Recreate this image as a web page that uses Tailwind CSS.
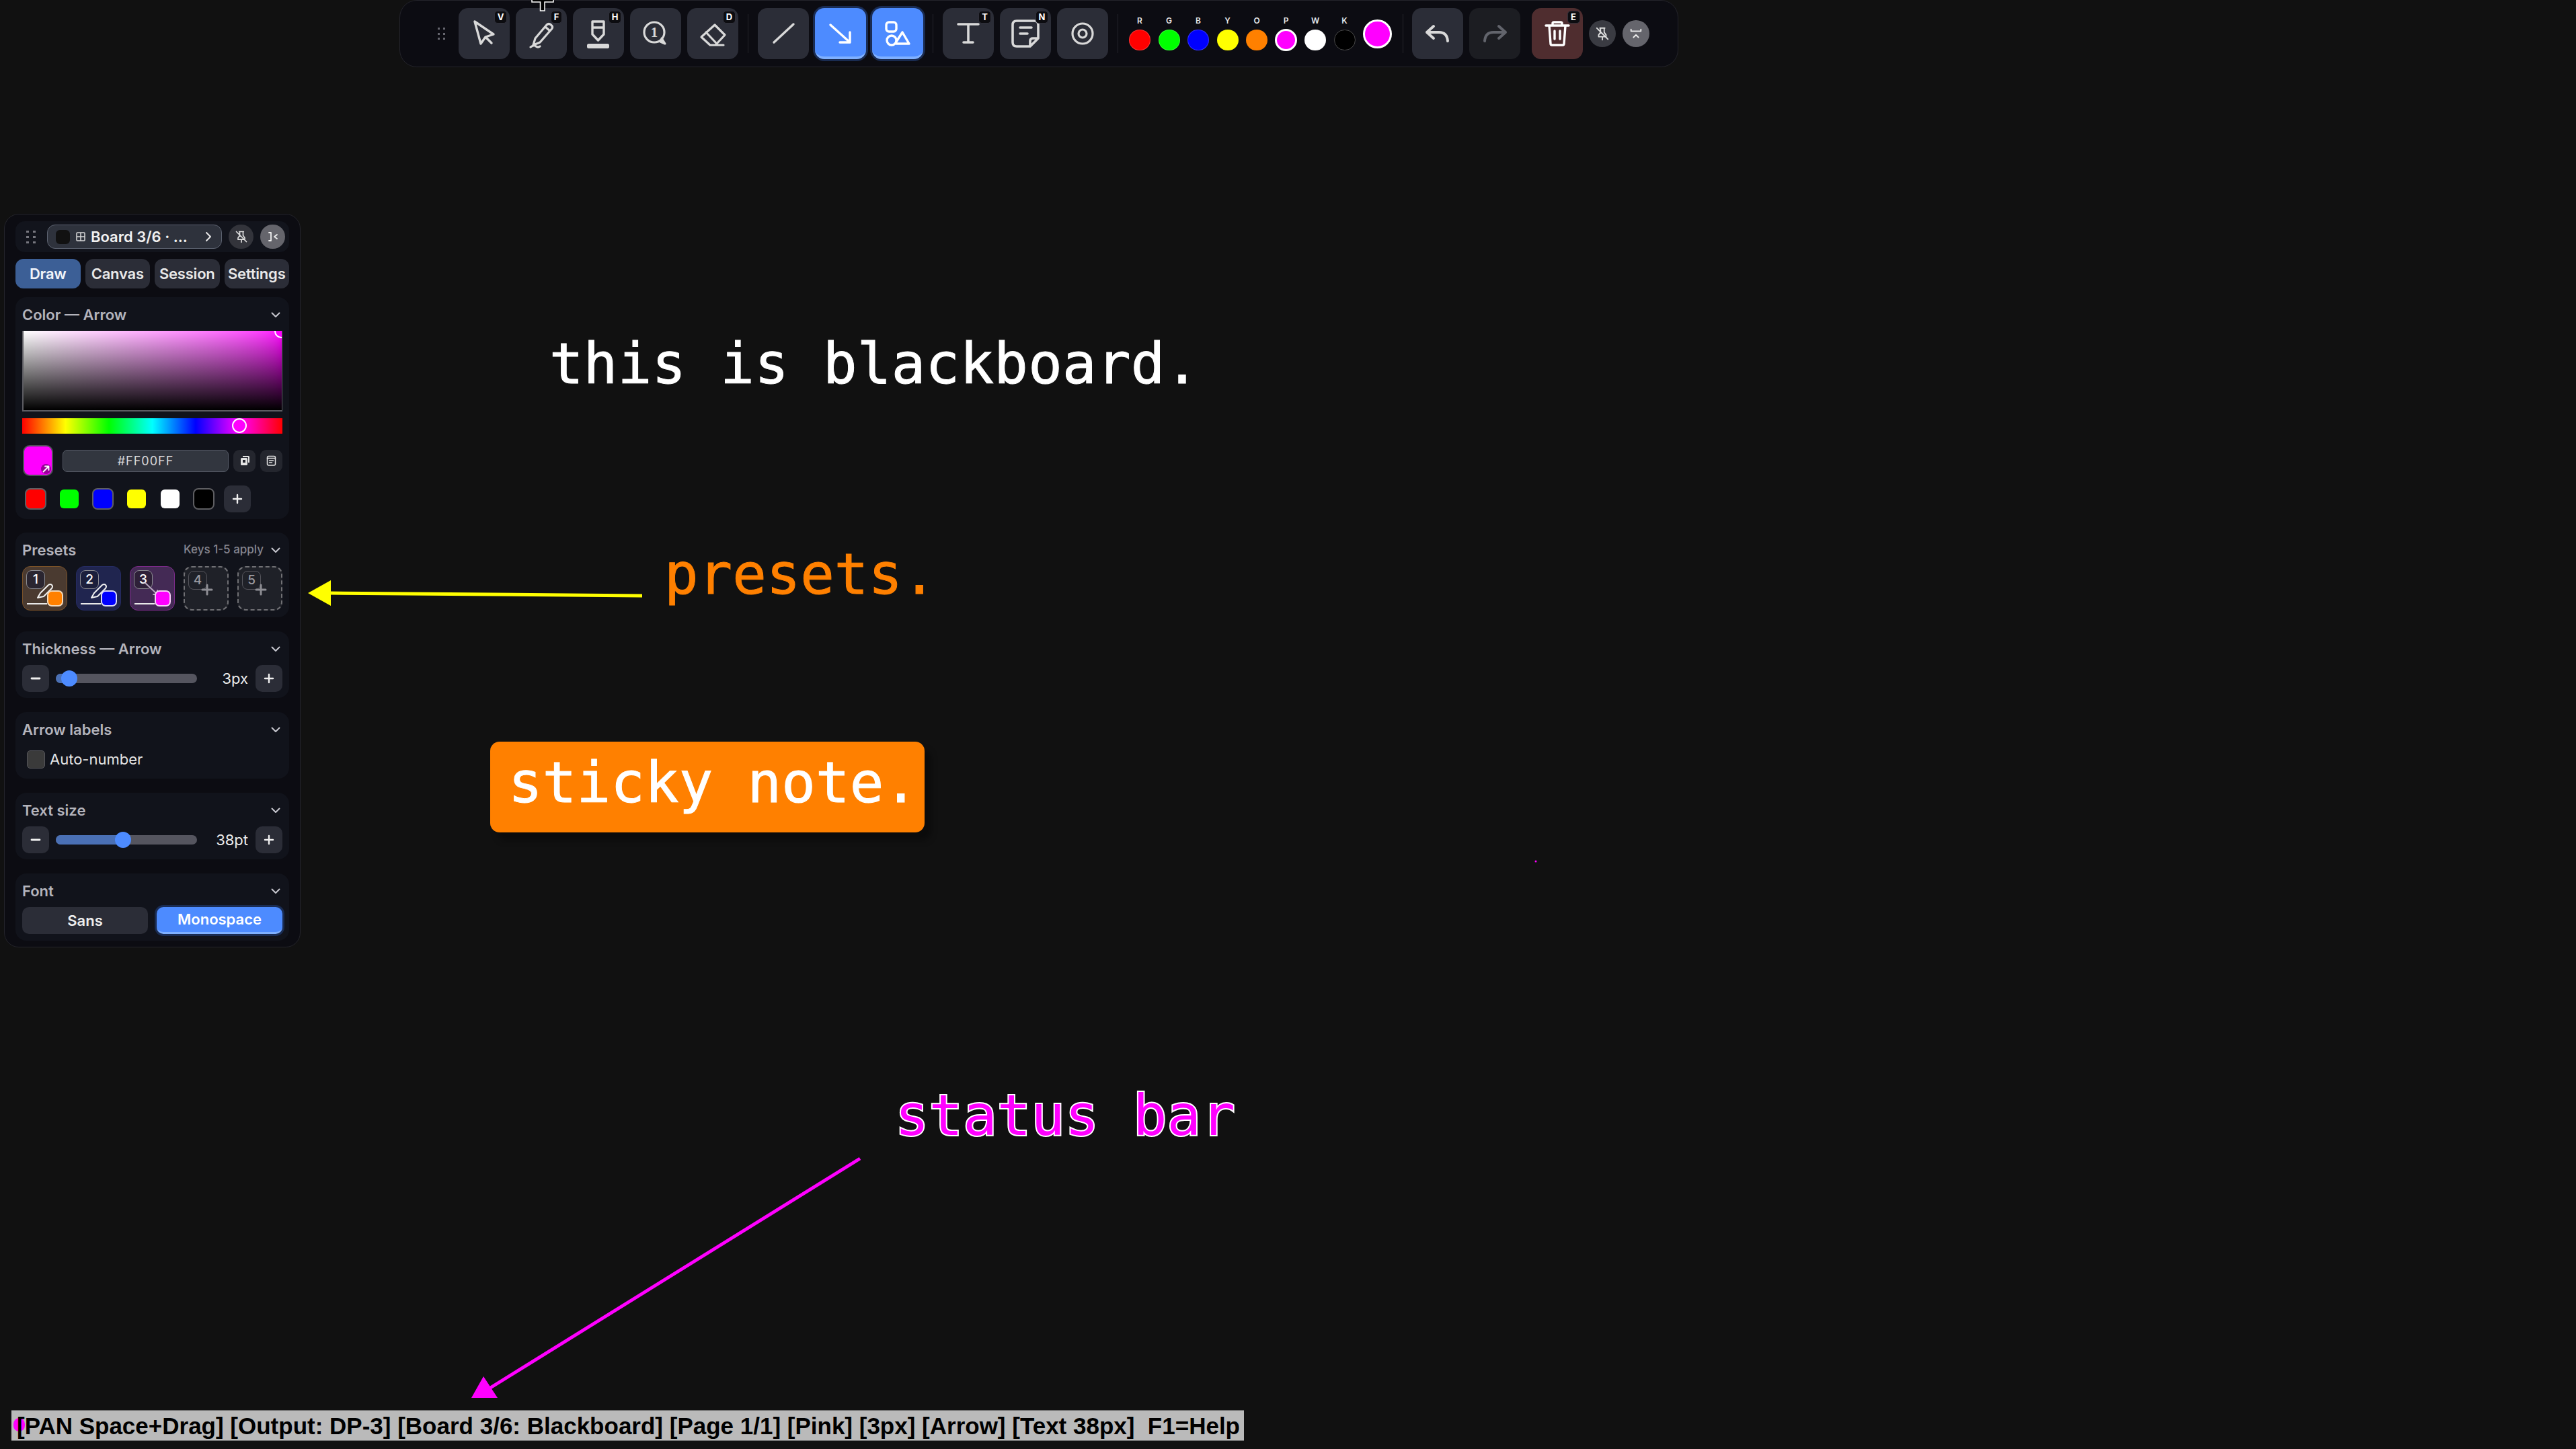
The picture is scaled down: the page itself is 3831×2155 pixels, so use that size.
<!DOCTYPE html>
<html lang="en">
<head>
  <meta charset="UTF-8" />
  <title>Blackboard overlay</title>
  <script src="https://cdn.jsdelivr.net/npm/@tailwindcss/browser@4"></script>
</head>
<body class="bg-[#111111] font-['Inter',sans-serif] overflow-hidden">
<div class="relative w-[3831px] h-[2155px] overflow-hidden">

  <!-- canvas drawings -->
  <svg class="absolute left-0 top-0" width="3831" height="2155" viewBox="0 0 3831 2155" fill="none">
    <line x1="955" y1="886" x2="490" y2="882" stroke="#ffff00" stroke-width="5"/>
    <polygon points="458,882 492,863 492,901" fill="#ffff00"/>
    <line x1="1279" y1="1723" x2="726" y2="2066" stroke="#ff00ff" stroke-width="5"/>
    <polygon points="719,2047 701,2079 740,2079" fill="#ff00ff"/>
    <circle cx="2284" cy="1281" r="1.5" fill="#ff00ff"/>
  </svg>

  <div class="absolute left-[817px] top-[499px] font-['DejaVu_Sans_Mono',monospace] text-[84px] leading-none tracking-[0.3px] text-white whitespace-pre [-webkit-text-stroke:1px_white]">this is blackboard.</div>
  <div class="absolute left-[988px] top-[812px] font-['DejaVu_Sans_Mono',monospace] text-[84px] leading-none text-[#ff8000] whitespace-pre [-webkit-text-stroke:1px_#ff8000]">presets.</div>
  <div class="absolute left-[729px] top-[1103px] w-[646px] h-[135px] rounded-[14px] bg-[#ff8000] shadow-[10px_12px_10px_rgba(0,0,0,0.35)] pl-[27px] pt-[19px] font-['DejaVu_Sans_Mono',monospace] text-[84px] leading-none tracking-[0.2px] text-white whitespace-pre [-webkit-text-stroke:1px_white]">sticky note.</div>
  <div class="absolute left-[1331px] top-[1617px] font-['DejaVu_Sans_Mono',monospace] text-[84px] leading-none text-[#ff00ff] whitespace-pre [-webkit-text-stroke:4px_white] [paint-order:stroke_fill]">status bar</div>

  <!-- toolbar -->
  <div class="absolute left-[594px] top-0 h-[100px] w-[1902px] rounded-[26px] border border-[#24242b] bg-[#0c0c12] flex items-center gap-[9px] pl-[56px]">
    <div class="grid grid-cols-2 gap-x-[5px] gap-y-[4.5px] mr-[11px]">
      <i class="w-[3px] h-[3px] bg-[#66666e]"></i><i class="w-[3px] h-[3px] bg-[#66666e]"></i><i class="w-[3px] h-[3px] bg-[#66666e]"></i><i class="w-[3px] h-[3px] bg-[#66666e]"></i><i class="w-[3px] h-[3px] bg-[#66666e]"></i><i class="w-[3px] h-[3px] bg-[#66666e]"></i>
    </div>

    <div class="relative w-[76px] h-[76px] rounded-[14px] bg-[#2b2d37]">
      <svg width="76" height="76" viewBox="0 0 76 76" fill="none" stroke="#d9d9d9" stroke-width="3.4" stroke-linecap="round" stroke-linejoin="round"><path d="M24 20 L52 39 L40 43 L33 53 Z M40 43 L49 52"/></svg>
      <span class="absolute right-[4px] top-[4px] w-[19px] h-[19px] rounded-[5px] border border-[#30303a] bg-[#0c0c10] flex items-center justify-center text-[13px] font-bold text-white">V</span>
    </div>
    <div class="relative w-[76px] h-[76px] rounded-[14px] bg-[#2b2d37]">
      <svg width="76" height="76" viewBox="0 0 76 76" fill="none" stroke="#d9d9d9" stroke-width="3.2" stroke-linecap="round" stroke-linejoin="round"><path d="M29 45 L46 25 Q49 22 52.500 25 Q56 28 53.500 31 L36 51 L26 55 Z M44 28 L51 34"/><path d="M22 58 Q28 54 30 57 Q33 59 36 57"/></svg>
      <span class="absolute right-[7px] top-[4px] w-[17px] h-[19px] rounded-[5px] border border-[#30303a] bg-[#0c0c10] flex items-center justify-center text-[13px] font-bold text-white">F</span>
    </div>
    <div class="relative w-[76px] h-[76px] rounded-[14px] bg-[#2b2d37]">
      <svg width="76" height="76" viewBox="0 0 76 76" fill="none" stroke="#d9d9d9" stroke-width="3.4" stroke-linecap="round" stroke-linejoin="round"><path d="M29 20 H46 V39 L37.500 48 L29 39 Z M29 29 H46"/><rect x="21" y="53" width="33" height="7" rx="2.500" fill="#d9d9d9" stroke="none"/></svg>
      <span class="absolute right-[4px] top-[4px] w-[19px] h-[19px] rounded-[5px] border border-[#30303a] bg-[#0c0c10] flex items-center justify-center text-[13px] font-bold text-white">H</span>
    </div>
    <div class="relative w-[76px] h-[76px] rounded-[14px] bg-[#2b2d37]">
      <svg width="76" height="76" viewBox="0 0 76 76" fill="none" stroke="#d9d9d9" stroke-width="3.2" stroke-linecap="round" stroke-linejoin="round"><circle cx="36" cy="36" r="15"/><path d="M47 45 L52 53 L45 50" fill="#d9d9d9"/><text x="36" y="43" text-anchor="middle" font-family="Liberation Serif" font-weight="700" font-size="21" fill="#d9d9d9" stroke="none">1</text></svg>
    </div>
    <div class="relative w-[76px] h-[76px] rounded-[14px] bg-[#2b2d37]">
      <svg width="76" height="76" viewBox="0 0 76 76" fill="none" stroke="#d9d9d9" stroke-width="3.2" stroke-linecap="round" stroke-linejoin="round"><path d="M41 25 L56 40 L42 55 H34 L21 43 Z M28 36 L44 53 M34 55 H54"/></svg>
      <span class="absolute right-[4px] top-[4px] w-[19px] h-[19px] rounded-[5px] border border-[#30303a] bg-[#0c0c10] flex items-center justify-center text-[13px] font-bold text-white">D</span>
    </div>

    <div class="w-px h-[58px] bg-[#24242b] mx-[5px]"></div>

    <div class="w-[76px] h-[76px] rounded-[14px] bg-[#2b2d37]">
      <svg width="76" height="76" viewBox="0 0 76 76" fill="none" stroke="#d9d9d9" stroke-width="3.4" stroke-linecap="round"><path d="M24 51 L53 24"/></svg>
    </div>
    <div class="w-[76px] h-[76px] rounded-[14px] bg-[#4d8bff] border-b-[4px] border-[#7fb0ff] shadow-[0_0_0_3px_#1a2c52]">
      <svg width="76" height="76" viewBox="0 0 76 76" fill="none" stroke="#ffffff" stroke-width="3.4" stroke-linecap="round" stroke-linejoin="round"><path d="M23 25 L52 51 M52 36 V51 H37"/></svg>
    </div>
    <div class="w-[76px] h-[76px] rounded-[14px] bg-[#4d8bff] border-b-[4px] border-[#7fb0ff] shadow-[0_0_0_3px_#1a2c52]">
      <svg width="76" height="76" viewBox="0 0 76 76" fill="none" stroke="#ffffff" stroke-width="3.4" stroke-linecap="round" stroke-linejoin="round"><rect x="21" y="21" width="15" height="14" rx="4"/><circle cx="29" cy="48" r="7"/><path d="M45 36 L55 53 H36 M45 36 L36 50"/></svg>
    </div>

    <div class="w-px h-[58px] bg-[#24242b] mx-[5px]"></div>

    <div class="relative w-[76px] h-[76px] rounded-[14px] bg-[#2b2d37]">
      <svg width="76" height="76" viewBox="0 0 76 76" fill="none" stroke="#d9d9d9" stroke-width="3.6" stroke-linecap="round"><path d="M23 24 H53 M38 24 V51 M31 51 H45"/></svg>
      <span class="absolute right-[4px] top-[4px] w-[19px] h-[19px] rounded-[5px] border border-[#30303a] bg-[#0c0c10] flex items-center justify-center text-[13px] font-bold text-white">T</span>
    </div>
    <div class="relative w-[76px] h-[76px] rounded-[14px] bg-[#2b2d37]">
      <svg width="76" height="76" viewBox="0 0 76 76" fill="none" stroke="#d9d9d9" stroke-width="3.6" stroke-linecap="round" stroke-linejoin="round"><path d="M45 57 H25 Q19 57 19 51 V25 Q19 19 25 19 H51 Q57 19 57 25 V45 Z M45 57 V49 Q45 45 49 45 H57"/><path d="M30 29 H47 M30 38 H41"/></svg>
      <span class="absolute right-[4px] top-[4px] w-[19px] h-[19px] rounded-[5px] border border-[#30303a] bg-[#0c0c10] flex items-center justify-center text-[13px] font-bold text-white">N</span>
    </div>
    <div class="w-[76px] h-[76px] rounded-[14px] bg-[#2b2d37]">
      <svg width="76" height="76" viewBox="0 0 76 76" fill="none" stroke="#d9d9d9" stroke-width="3.2"><circle cx="38" cy="38" r="15"/><circle cx="38" cy="38" r="6"/></svg>
    </div>

    <div class="w-px h-[58px] bg-[#24242b] mx-[5px]"></div>

    <!-- quick colours -->
    <div class="flex gap-[11.5px] ml-[2px] text-center text-[12px] leading-[12px] font-semibold text-[#e8e8e8]">
      <div class="flex flex-col items-center gap-[7px] w-[32px]"><span>R</span><i class="w-[32px] h-[31px] rounded-full bg-[#ff0000] border border-white/20"></i></div>
      <div class="flex flex-col items-center gap-[7px] w-[32px]"><span>G</span><i class="w-[32px] h-[31px] rounded-full bg-[#00ff00] border border-white/20"></i></div>
      <div class="flex flex-col items-center gap-[7px] w-[32px]"><span>B</span><i class="w-[32px] h-[31px] rounded-full bg-[#0000ff] border border-white/20"></i></div>
      <div class="flex flex-col items-center gap-[7px] w-[32px]"><span>Y</span><i class="w-[32px] h-[31px] rounded-full bg-[#ffff00]"></i></div>
      <div class="flex flex-col items-center gap-[7px] w-[32px]"><span>O</span><i class="w-[32px] h-[31px] rounded-full bg-[#ff8000]"></i></div>
      <div class="flex flex-col items-center gap-[7px] w-[32px]"><span>P</span><i class="w-[33px] h-[33px] -mt-[1px] rounded-full bg-[#ff00ff] border-[3px] border-white"></i></div>
      <div class="flex flex-col items-center gap-[7px] w-[32px]"><span>W</span><i class="w-[32px] h-[31px] rounded-full bg-white"></i></div>
      <div class="flex flex-col items-center gap-[7px] w-[32px]"><span>K</span><i class="w-[32px] h-[31px] rounded-full bg-black border-[1.5px] border-[#4a4a4a]"></i></div>
    </div>
    <div class="w-[43px] h-[43px] ml-[2px] rounded-full bg-[#ff00ff] border-[3px] border-white"></div>

    <div class="w-px h-[58px] bg-[#24242b] ml-[7px] mr-[4px]"></div>

    <div class="w-[76px] h-[76px] rounded-[14px] bg-[#2b2d37]">
      <svg width="76" height="76" viewBox="0 0 76 76" fill="none" stroke="#d9d9d9" stroke-width="4" stroke-linecap="round" stroke-linejoin="round"><path d="M32 27 L22 36 L32 45 M22 36 H40 Q52 36 53 49"/></svg>
    </div>
    <div class="w-[76px] h-[76px] rounded-[14px] bg-[#1c1d22]">
      <svg width="76" height="76" viewBox="0 0 76 76" fill="none" stroke="#62646c" stroke-width="4" stroke-linecap="round" stroke-linejoin="round"><path d="M44 27 L54 36 L44 45 M54 36 H36 Q24 36 23 49"/></svg>
    </div>
    <div class="relative w-[76px] h-[76px] ml-[8px] rounded-[14px] bg-[#4f2d2f]">
      <svg width="76" height="76" viewBox="0 0 76 76" fill="none" stroke="#ffffff" stroke-width="3.4" stroke-linecap="round" stroke-linejoin="round"><path d="M21 26 H55 M31 26 V23 Q31 21 33 21 H43 Q45 21 45 23 V26 M26 26 L28 53 Q28 55 30 55 H46 Q48 55 48 53 L50 26 M34 34 V46 M42 34 V46"/></svg>
      <span class="absolute right-[4px] top-[4px] w-[19px] h-[19px] rounded-[5px] border border-[#30303a] bg-[#0c0c10] flex items-center justify-center text-[13px] font-bold text-white">E</span>
    </div>
    <div class="w-[40px] h-[40px] rounded-full bg-[#3a3b42] flex items-center justify-center">
      <svg width="22" height="22" viewBox="0 0 24 24" fill="none" stroke="#e0e0e0" stroke-width="2" stroke-linecap="round" stroke-linejoin="round"><path d="M12 17v5M8 3h8M9 3v7l-3 4v3h12v-3l-3-4V3M3 3l18 18"/></svg>
    </div>
    <div class="w-[40px] h-[40px] ml-px rounded-full bg-[#65656c] flex items-center justify-center">
      <svg width="22" height="22" viewBox="0 0 24 24" fill="none" stroke="#f0f0f0" stroke-width="2" stroke-linecap="round" stroke-linejoin="round"><path d="M4 5v3h16V5M8 18l4-4 4 4"/></svg>
    </div>
  </div>

  <!-- mouse cursor -->
  <svg class="absolute left-[788px] top-0" width="38" height="18" viewBox="0 0 38 18" fill="#000" stroke="#fff" stroke-width="1.500"><path d="M3 -4 H35 V3 H22 V16 H15.500 V3 H3 Z"/></svg>

  <!-- side panel -->
  <div class="absolute left-[6px] top-[318px] w-[441px] h-[1091px] rounded-[22px] border border-[#24242b] bg-[#0c0c12] px-[16px] pt-[10px] flex flex-col">
    <div class="h-[46px] rounded-[14px] bg-[#12141c] flex items-center pl-[16px] shrink-0">
      <div class="grid grid-cols-2 gap-x-[6px] gap-y-[5px] mr-[17px]">
        <i class="w-[4px] h-[3px] bg-[#77777f]"></i><i class="w-[4px] h-[3px] bg-[#77777f]"></i><i class="w-[4px] h-[3px] bg-[#77777f]"></i><i class="w-[4px] h-[3px] bg-[#77777f]"></i><i class="w-[4px] h-[3px] bg-[#77777f]"></i><i class="w-[4px] h-[3px] bg-[#77777f]"></i>
      </div>
      <div class="w-[260px] h-[36px] rounded-[12px] border-[1.5px] border-[#5d6371] bg-[#2e323c] flex items-center pl-[12px] pr-[14px] text-[22px] font-semibold text-[#f1f1f1] whitespace-pre">
        <i class="w-[21px] h-[21px] rounded-[6px] bg-[#111111] mr-[9px]"></i>
        <svg class="mr-[8px]" width="14" height="14" viewBox="0 0 14 14" fill="none" stroke="#d8d8d8" stroke-width="1.500"><rect x="1" y="1" width="12" height="12" rx="1"/><path d="M7 1v12M1 7h12"/></svg>
        <span>Board 3/6 · ...</span>
        <svg class="ml-auto" width="10" height="16" viewBox="0 0 10 16" fill="none" stroke="#e8e8e8" stroke-width="2" stroke-linecap="round" stroke-linejoin="round"><path d="M2 2l6 6-6 6"/></svg>
      </div>
      <div class="w-[37px] h-[36px] ml-[10px] rounded-full bg-[#33343b] flex items-center justify-center">
        <svg width="20" height="20" viewBox="0 0 24 24" fill="none" stroke="#e0e0e0" stroke-width="2" stroke-linecap="round" stroke-linejoin="round"><path d="M12 17v5M8 3h8M9 3v7l-3 4v3h12v-3l-3-4V3M3 3l18 18"/></svg>
      </div>
      <div class="w-[37px] h-[36px] ml-[10px] rounded-full bg-[#65656c] flex items-center justify-center">
        <svg width="18" height="18" viewBox="0 0 18 18" fill="none" stroke="#f0f0f0" stroke-width="1.800" stroke-linecap="round" stroke-linejoin="round"><path d="M3 3h3v12H3M15 6l-4 3 4 3"/></svg>
      </div>
    </div>

    <div class="mt-[10px] grid grid-cols-4 gap-[7px] shrink-0 text-[22px] font-semibold tracking-[-0.2px]">
      <div class="h-[44px] rounded-[12px] bg-[#3c5f96] flex items-center justify-center text-[#f0f4fa]">Draw</div>
      <div class="h-[44px] rounded-[12px] bg-[#2b2d37] flex items-center justify-center text-[#e8e8e8]">Canvas</div>
      <div class="h-[44px] rounded-[12px] bg-[#2b2d37] flex items-center justify-center text-[#e8e8e8]">Session</div>
      <div class="h-[44px] rounded-[12px] bg-[#2b2d37] flex items-center justify-center text-[#e8e8e8]">Settings</div>
    </div>

    <div class="mt-[13px] flex flex-col gap-[21px]">
      <!-- color -->
      <section class="rounded-[16px] bg-[#11131b] px-[10px] pt-[14px] pb-[10px]">
        <div class="h-[24px] mb-[12px] flex items-center justify-between text-[22px] font-semibold text-[#b4b4bc]">
          <span>Color — Arrow</span>
          <svg class="mr-[3px]" width="14" height="9" viewBox="0 0 14 9" fill="none" stroke="#c8c8d0" stroke-width="2" stroke-linecap="round" stroke-linejoin="round"><path d="M1.500 1.500L7 7l5.500-5.500"/></svg>
        </div>
        <div class="relative h-[120px] overflow-hidden bg-linear-to-r from-white to-[#ff00ff] border-l-2 border-b-2 border-r border-[#5c5c62]">
          <div class="absolute inset-0 bg-linear-to-b from-transparent to-black"></div>
          <div class="absolute -right-[10px] -top-[10px] w-[21px] h-[21px] rounded-full border-2 border-white bg-[#ff00ff]"></div>
        </div>
        <div class="relative mt-[10px] h-[23px] bg-[linear-gradient(to_right,#f00,#ff0,#0f0,#0ff,#00f,#f0f,#f00)]">
          <div class="absolute left-[312px] -top-[0.5px] w-[22px] h-[22px] rounded-full border-2 border-white bg-[#ff00ff]"></div>
        </div>
        <div class="mt-[17px] h-[46px] flex items-center">
          <div class="relative w-[45px] h-[46px] ml-px rounded-[10px] border-2 border-[#50505a] bg-[#ff00ff]">
            <div class="absolute right-[1px] bottom-[1px] w-[15px] h-[15px] rounded-full bg-[#990099] flex items-center justify-center">
              <svg width="11" height="11" viewBox="0 0 11 11" fill="none" stroke="#fff" stroke-width="1.800" stroke-linecap="round" stroke-linejoin="round"><path d="M1.500 9.500L9.500 1.500M4 1.500h5.500V7"/></svg>
            </div>
          </div>
          <div class="w-[247px] h-[33px] ml-[14px] rounded-[7px] border-[1.5px] border-[#555a66] bg-[#32363f] flex items-center justify-center text-[18px] tracking-[1px] text-[#d8d8dc]">#FF00FF</div>
          <div class="w-[33px] h-[33px] ml-[7px] rounded-[9px] bg-[#24262e] flex items-center justify-center">
            <svg width="14" height="14" viewBox="0 0 14 14" fill="#e4e4e4"><path d="M4 0h8.500a1.500 1.500 0 0 1 1.500 1.500V10h-2V2H4z"/><rect x="1" y="3" width="10" height="11" rx="1.500"/><rect x="4" y="6" width="4" height="4" fill="#24262e"/></svg>
          </div>
          <div class="w-[33px] h-[33px] ml-[7px] rounded-[9px] bg-[#24262e] flex items-center justify-center">
            <svg width="15" height="16" viewBox="0 0 15 16" fill="none" stroke="#e4e4e4" stroke-width="1.500" stroke-linecap="round"><rect x="1.500" y="1.500" width="12" height="13.500" rx="2"/><path d="M1.500 4.500h12M4.500 8h6M4.500 11h4"/></svg>
          </div>
        </div>
        <div class="mt-[14px] h-[40px] pl-[4px] flex items-center gap-[18px]">
          <i class="w-[32px] h-[32px] rounded-[8px] border-2 border-[#5e5e62] bg-[#ff0000]"></i>
          <i class="w-[32px] h-[32px] rounded-[8px] border-2 border-transparent bg-clip-padding bg-[#00ff00]"></i>
          <i class="w-[32px] h-[32px] rounded-[8px] border-2 border-[#5e5e62] bg-[#0000ff]"></i>
          <i class="w-[32px] h-[32px] rounded-[8px] border-2 border-transparent bg-clip-padding bg-[#ffff00]"></i>
          <i class="w-[32px] h-[32px] rounded-[8px] border-2 border-transparent bg-clip-padding bg-white"></i>
          <i class="w-[32px] h-[32px] rounded-[8px] border-2 border-[#5e5e62] bg-black"></i>
          <div class="w-[40px] h-[40px] -ml-[4px] rounded-[10px] bg-[#2b2d37] flex items-center justify-center">
            <svg width="16" height="16" viewBox="0 0 16 16" stroke="#f0f0f0" stroke-width="2.400" stroke-linecap="round"><path d="M8 2v12M2 8h12"/></svg>
          </div>
        </div>
      </section>

      <!-- presets -->
      <section class="-mt-px rounded-[16px] bg-[#11131b] px-[10px] pt-[14px] pb-[10px]">
        <div class="h-[24px] mb-[12px] flex items-center text-[22px] font-semibold text-[#b4b4bc]">
          <span>Presets</span>
          <span class="ml-auto mr-[11px] text-[17px] font-medium text-[#85858f]">Keys 1-5 apply</span>
          <svg class="mr-[3px]" width="14" height="9" viewBox="0 0 14 9" fill="none" stroke="#c8c8d0" stroke-width="2" stroke-linecap="round" stroke-linejoin="round"><path d="M1.500 1.500L7 7l5.500-5.500"/></svg>
        </div>
        <div class="flex justify-between">
          <div class="relative w-[67px] h-[66px] rounded-[12px] border-[1.5px] border-[#7b5228] bg-[#4a3a30]">
            <span class="absolute left-[5px] top-[5px] w-[28px] h-[28px] rounded-[8px] border-[1.5px] border-[#8a8a90] bg-[#2a2530] flex items-center justify-center text-[19px] font-medium text-white">1</span>
            <svg class="absolute left-[20px] top-[24px]" width="26" height="24" viewBox="0 0 26 24" fill="none" stroke="#f0f0f0" stroke-width="2" stroke-linejoin="round"><path d="M6 15L18 3q3-2 5 0t0 5L11 20l-9 2z"/></svg>
            <i class="absolute left-[6px] top-[54px] w-[30px] h-[2px] bg-[#e8e8e8]"></i>
            <i class="absolute left-[36px] top-[35px] w-[24px] h-[24px] rounded-[7px] border-2 border-[#f2d9bb] bg-[#ff8000]"></i>
          </div>
          <div class="relative w-[67px] h-[66px] rounded-[12px] border-[1.5px] border-[#252b61] bg-[#20254f]">
            <span class="absolute left-[5px] top-[5px] w-[28px] h-[28px] rounded-[8px] border-[1.5px] border-[#8a8a90] bg-[#1c1f3c] flex items-center justify-center text-[19px] font-medium text-white">2</span>
            <svg class="absolute left-[20px] top-[24px]" width="26" height="24" viewBox="0 0 26 24" fill="none" stroke="#f0f0f0" stroke-width="2" stroke-linejoin="round"><path d="M6 15L18 3q3-2 5 0t0 5L11 20l-9 2z"/></svg>
            <i class="absolute left-[6px] top-[54px] w-[30px] h-[2px] bg-[#e8e8e8]"></i>
            <i class="absolute left-[36px] top-[35px] w-[24px] h-[24px] rounded-[7px] border-2 border-[#d8d8f8] bg-[#0000ff]"></i>
          </div>
          <div class="relative w-[67px] h-[66px] rounded-[12px] border-[1.5px] border-[#7a2a88] bg-[#442a55]">
            <span class="absolute left-[5px] top-[5px] w-[28px] h-[28px] rounded-[8px] border-[1.5px] border-[#8a8a90] bg-[#2e2038] flex items-center justify-center text-[19px] font-medium text-white">3</span>
            <svg class="absolute left-[18px] top-[20px]" width="26" height="26" viewBox="0 0 26 26" fill="none" stroke="#b8a8c0" stroke-width="2" stroke-linecap="round"><path d="M4 4l18 17M16 21h6v-6"/></svg>
            <i class="absolute left-[6px] top-[54px] w-[30px] h-[2px] bg-[#e8e8e8]"></i>
            <i class="absolute left-[36px] top-[35px] w-[24px] h-[24px] rounded-[7px] border-2 border-[#f8d0f8] bg-[#ff00ff]"></i>
          </div>
          <div class="relative w-[67px] h-[66px] rounded-[12px] border-2 border-dashed border-[#707074] bg-[#1f2128]">
            <span class="absolute left-[5px] top-[5px] w-[28px] h-[28px] rounded-[8px] border-[1.5px] border-[#55555c] flex items-center justify-center text-[19px] font-medium text-[#9a9aa0]">4</span>
            <svg class="absolute left-[24px] top-[24px]" width="18" height="18" viewBox="0 0 18 18" stroke="#8e8e94" stroke-width="3" stroke-linecap="round"><path d="M9 2v14M2 9h14"/></svg>
          </div>
          <div class="relative w-[67px] h-[66px] rounded-[12px] border-2 border-dashed border-[#707074] bg-[#1f2128]">
            <span class="absolute left-[5px] top-[5px] w-[28px] h-[28px] rounded-[8px] border-[1.5px] border-[#55555c] flex items-center justify-center text-[19px] font-medium text-[#9a9aa0]">5</span>
            <svg class="absolute left-[24px] top-[24px]" width="18" height="18" viewBox="0 0 18 18" stroke="#8e8e94" stroke-width="3" stroke-linecap="round"><path d="M9 2v14M2 9h14"/></svg>
          </div>
        </div>
      </section>

      <!-- thickness -->
      <section class="rounded-[16px] bg-[#11131b] px-[10px] pt-[14px] pb-[9px]">
        <div class="h-[24px] mb-[12px] flex items-center justify-between text-[22px] font-semibold text-[#b4b4bc]">
          <span>Thickness — Arrow</span>
          <svg class="mr-[3px]" width="14" height="9" viewBox="0 0 14 9" fill="none" stroke="#c8c8d0" stroke-width="2" stroke-linecap="round" stroke-linejoin="round"><path d="M1.500 1.500L7 7l5.500-5.500"/></svg>
        </div>
        <div class="h-[40px] flex items-center">
          <div class="w-[40px] h-[40px] rounded-[10px] bg-[#2b2d37] flex items-center justify-center">
            <svg width="16" height="4" viewBox="0 0 16 4" stroke="#f0f0f0" stroke-width="2.800" stroke-linecap="round"><path d="M2 2h12"/></svg>
          </div>
          <div class="relative w-[210px] h-[14px] ml-[10px] rounded-full bg-[#55555f]">
            <div class="h-full w-[20px] rounded-full bg-[#4a70b5]"></div>
            <div class="absolute left-[8px] -top-[5px] w-[24px] h-[24px] rounded-full bg-[#4d8bff]"></div>
          </div>
          <span class="flex-1 pr-[11px] text-right text-[22px] text-[#ececec]">3px</span>
          <div class="w-[40px] h-[40px] rounded-[10px] bg-[#2b2d37] flex items-center justify-center">
            <svg width="16" height="16" viewBox="0 0 16 16" stroke="#f0f0f0" stroke-width="2.400" stroke-linecap="round"><path d="M8 2v12M2 8h12"/></svg>
          </div>
        </div>
      </section>

      <!-- arrow labels -->
      <section class="rounded-[16px] bg-[#11131b] px-[10px] pt-[14px] pb-[9px]">
        <div class="h-[24px] mb-[12px] flex items-center justify-between text-[22px] font-semibold text-[#b4b4bc]">
          <span>Arrow labels</span>
          <svg class="mr-[3px]" width="14" height="9" viewBox="0 0 14 9" fill="none" stroke="#c8c8d0" stroke-width="2" stroke-linecap="round" stroke-linejoin="round"><path d="M1.500 1.500L7 7l5.500-5.500"/></svg>
        </div>
        <div class="h-[40px] pl-[7px] flex items-center">
          <i class="w-[27px] h-[27px] rounded-[5px] border border-[#55555a] bg-[#3a3a3a]"></i>
          <span class="ml-[7px] text-[22px] text-[#e4e4e4]">Auto-number</span>
        </div>
      </section>

      <!-- text size -->
      <section class="rounded-[16px] bg-[#11131b] px-[10px] pt-[14px] pb-[9px]">
        <div class="h-[24px] mb-[12px] flex items-center justify-between text-[22px] font-semibold text-[#b4b4bc]">
          <span>Text size</span>
          <svg class="mr-[3px]" width="14" height="9" viewBox="0 0 14 9" fill="none" stroke="#c8c8d0" stroke-width="2" stroke-linecap="round" stroke-linejoin="round"><path d="M1.500 1.500L7 7l5.500-5.500"/></svg>
        </div>
        <div class="h-[40px] flex items-center">
          <div class="w-[40px] h-[40px] rounded-[10px] bg-[#2b2d37] flex items-center justify-center">
            <svg width="16" height="4" viewBox="0 0 16 4" stroke="#f0f0f0" stroke-width="2.800" stroke-linecap="round"><path d="M2 2h12"/></svg>
          </div>
          <div class="relative w-[210px] h-[14px] ml-[10px] rounded-full bg-[#55555f]">
            <div class="h-full w-[100px] rounded-full bg-[#4a70b5]"></div>
            <div class="absolute left-[88px] -top-[5px] w-[24px] h-[24px] rounded-full bg-[#4d8bff]"></div>
          </div>
          <span class="flex-1 pr-[11px] text-right text-[22px] text-[#ececec]">38pt</span>
          <div class="w-[40px] h-[40px] rounded-[10px] bg-[#2b2d37] flex items-center justify-center">
            <svg width="16" height="16" viewBox="0 0 16 16" stroke="#f0f0f0" stroke-width="2.400" stroke-linecap="round"><path d="M8 2v12M2 8h12"/></svg>
          </div>
        </div>
      </section>

      <!-- font -->
      <section class="rounded-[16px] bg-[#11131b] px-[10px] pt-[14px] pb-[10px]">
        <div class="h-[24px] mb-[12px] flex items-center justify-between text-[22px] font-semibold text-[#b4b4bc]">
          <span>Font</span>
          <svg class="mr-[3px]" width="14" height="9" viewBox="0 0 14 9" fill="none" stroke="#c8c8d0" stroke-width="2" stroke-linecap="round" stroke-linejoin="round"><path d="M1.500 1.500L7 7l5.500-5.500"/></svg>
        </div>
        <div class="flex gap-[13px] text-[22px] font-semibold">
          <div class="flex-1 h-[40px] rounded-[10px] bg-[#2b2d37] flex items-center justify-center text-[#ececec]">Sans</div>
          <div class="flex-1 h-[40px] rounded-[10px] bg-[#4d8bff] border-b-[3px] border-[#7fb0ff] shadow-[0_0_0_3px_#1a2c52] flex items-center justify-center text-white">Monospace</div>
        </div>
      </section>
    </div>
  </div>

  <!-- status bar -->
  <div class="absolute left-[17px] top-[2097px] h-[46px] border-t border-[#6a6a6a] border-b bg-[#bababa] pl-[8px] pr-[6px] pt-[2px] flex items-center font-['Liberation_Sans',sans-serif] font-bold text-[35px] text-black whitespace-pre">
    <i class="absolute left-[3px] top-[11px] w-[17px] h-[20px] rounded-full bg-[#ff00ff]"></i>
    <span class="relative">[PAN Space+Drag] [Output: DP-3] [Board 3/6: Blackboard] [Page 1/1] [Pink] [3px] [Arrow] [Text 38px]  F1=Help</span>
  </div>
</div>
</body>
</html>
